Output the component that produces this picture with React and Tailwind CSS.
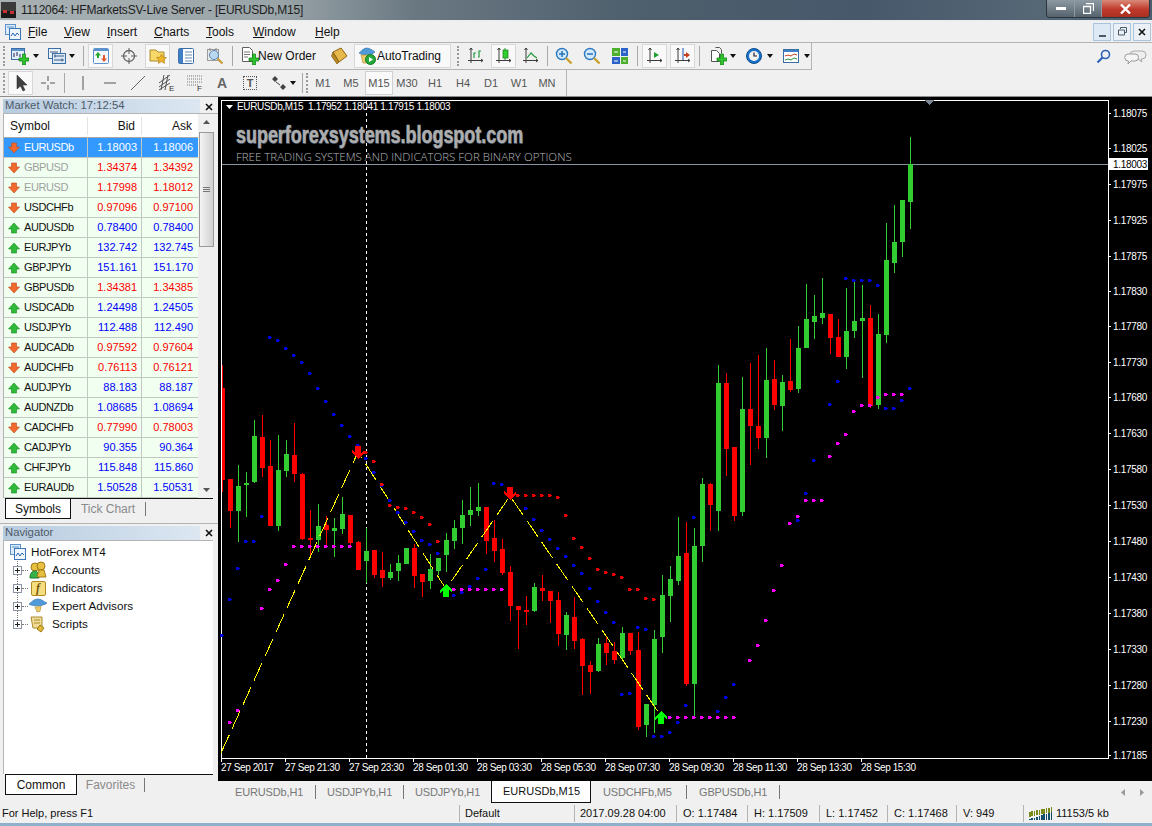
import React from 'react';

// [center x, wick top, body top, body bottom, wick bottom, colour]
const BARS = [
  [230,479,479,511,528,'r'],[238,465,486,511,542,'g'],[246,472,483,485,517,'g'],[254,420,436,482,483,'g'],
  [262,415,437,468,477,'r'],[270,440,466,526,526,'r'],[278,435,470,526,531,'g'],[286,440,454,471,477,'g'],
  [294,423,455,474,482,'r'],[302,473,474,539,540,'r'],[310,510,538,540,558,'r'],[318,504,526,540,552,'g'],
  [326,516,525,530,546,'r'],[334,518,528,531,557,'g'],[342,497,514,529,534,'g'],[350,515,515,543,547,'r'],
  [358,541,542,570,570,'r'],[366,528,551,561,583,'g'],[374,550,550,575,578,'r'],[382,552,570,578,587,'r'],
  [390,564,572,578,580,'g'],[398,555,563,571,581,'g'],[406,548,548,564,564,'g'],[414,544,548,576,588,'r'],
  [422,574,574,582,597,'r'],[430,554,569,581,589,'g'],[438,558,558,571,575,'g'],[446,533,540,555,572,'g'],
  [454,520,528,541,549,'g'],[462,500,515,528,544,'g'],[470,487,510,515,526,'g'],[478,483,507,511,516,'g'],
  [486,507,507,541,554,'r'],[494,520,538,551,562,'r'],[502,539,549,573,575,'r'],[510,566,572,606,621,'r'],
  [518,606,606,610,649,'r'],[526,596,610,612,625,'r'],[534,583,587,611,612,'g'],[542,575,588,591,601,'r'],
  [550,591,591,601,623,'r'],[558,592,600,634,646,'r'],[566,612,615,635,650,'g'],[574,597,617,641,649,'r'],
  [582,638,639,666,695,'r'],[590,661,665,672,694,'r'],[598,638,644,671,672,'g'],[606,637,643,653,665,'r'],
  [614,642,651,660,664,'r'],[622,627,633,658,661,'g'],[630,633,633,651,655,'r'],[638,632,650,727,730,'r'],
  [646,704,704,725,737,'g'],[654,630,639,705,733,'g'],[662,575,595,637,653,'g'],[670,566,579,596,622,'g'],
  [678,517,556,581,585,'g'],[686,522,553,684,686,'r'],[694,528,546,684,717,'g'],[702,478,484,546,562,'g'],
  [710,483,484,505,531,'r'],[718,365,383,511,531,'g'],[726,373,383,449,476,'r'],[734,447,447,516,521,'r'],
  [742,377,409,512,516,'g'],[750,363,409,426,465,'r'],[758,355,426,438,449,'r'],[766,348,380,438,458,'g'],
  [774,360,379,405,410,'r'],[782,375,382,406,431,'g'],[790,339,381,390,392,'r'],[798,326,348,389,393,'g'],
  [806,284,319,348,348,'g'],[814,295,316,322,339,'g'],[822,278,313,318,324,'g'],[830,314,314,338,354,'r'],
  [838,319,337,357,357,'r'],[846,288,331,357,369,'g'],[854,282,321,331,338,'g'],[862,285,318,321,378,'g'],
  [870,305,318,406,408,'r'],[878,314,334,405,409,'g'],[886,223,260,335,343,'g'],[894,205,242,263,273,'g'],
  [902,200,200,242,257,'g'],[910,137,164,202,229,'g'],
];

const BLUE = [
  [221,635],[229,599],[237,568],[245,541],[253,541],[261,516],[269,337],[277,340],[285,348],[293,355],[301,362],
  [309,373],[317,388],[325,401],[333,414],[341,425],[349,436],[357,445],[365,458],[373,472],[381,485],[389,500],
  [397,512],[405,522],[413,531],[421,540],[429,544],[437,553],[453,595],[461,592],[469,586],[477,578],[485,569],
  [493,483],[501,484],[509,488],[517,495],[525,508],[533,519],[541,530],[549,539],[557,548],[565,556],[573,565],
  [581,573],[589,588],[597,601],[605,612],[613,622],[621,694],[629,693],[637,627],[645,629],[653,736],[661,736],
  [669,732],[677,722],[685,705],[693,517],[717,711],[725,697],[733,684],[797,520],[805,493],[813,460],[829,404],
  [837,381],[845,278],[853,280],[861,280],[869,280],[877,285],[885,408],[893,408],[901,400],[909,388],
];

const RED = [
  [365,452],[373,461],[381,484],[389,505],[397,507],[405,508],[413,512],[421,517],[429,524],[437,541],
  [517,495],[525,495],[533,495],[541,495],[549,495],[557,497],[565,515],[573,538],[581,547],[589,558],[597,569],
  [605,572],[613,574],[621,577],[629,589],[637,589],[645,598],[653,599],
];

const MAGENTA = [
  [229,722],[237,710],[261,608],[269,589],[277,580],[285,564],[293,546],[301,546],[309,546],[317,546],[325,546],
  [333,546],[341,546],[349,546],[453,589],[461,589],[469,589],[477,589],[485,589],[493,589],[501,589],
  [669,717],[677,717],[685,717],[693,717],[701,717],[709,717],[717,717],[725,717],[733,717],
  [749,660],[757,645],[765,620],[773,590],[781,565],[789,523],[797,516],[805,500],[813,500],[821,500],
  [829,456],[837,443],[845,434],[853,411],[861,405],[869,405],[877,397],[885,394],[893,394],[901,394],
];

const PRICES = [
  ['1.18075',113],['1.18025',148],['1.17975',184],['1.17925',220],['1.17875',256],['1.17830',291],['1.17780',326],
  ['1.17730',362],['1.17680',397],['1.17630',433],['1.17580',469],['1.17530',505],['1.17480',541],['1.17430',577],
  ['1.17380',613],['1.17330',649],['1.17280',685],['1.17230',721],['1.17185',755],
];

const TIMES = [
  ['27 Sep 2017',221],['27 Sep 21:30',285],['27 Sep 23:30',349],['28 Sep 01:30',413],['28 Sep 03:30',477],
  ['28 Sep 05:30',541],['28 Sep 07:30',605],['28 Sep 09:30',669],['28 Sep 11:30',733],['28 Sep 13:30',797],['28 Sep 15:30',861],
];

const QUOTES = [
  ['EURUSDb','1.18003','1.18006','d'],['GBPUSD','1.34374','1.34392','d'],['EURUSD','1.17998','1.18012','d'],
  ['USDCHFb','0.97096','0.97100','d'],['AUDUSDb','0.78400','0.78400','u'],['EURJPYb','132.742','132.745','u'],
  ['GBPJPYb','151.161','151.170','u'],['GBPUSDb','1.34381','1.34385','d'],['USDCADb','1.24498','1.24505','u'],
  ['USDJPYb','112.488','112.490','u'],['AUDCADb','0.97592','0.97604','d'],['AUDCHFb','0.76113','0.76121','d'],
  ['AUDJPYb','88.183','88.187','u'],['AUDNZDb','1.08685','1.08694','u'],['CADCHFb','0.77990','0.78003','d'],
  ['CADJPYb','90.355','90.364','u'],['CHFJPYb','115.848','115.860','u'],['EURAUDb','1.50528','1.50531','u'],
];

const Sep = ({ className = '' }) => <span className={`h-[20px] w-px shrink-0 bg-[#a8a8a8] ${className}`} />;
const Grip = ({ className = '' }) => (
  <span className={`h-[20px] w-[2px] shrink-0 border-l-2 border-dotted border-[#9a9a9a] ${className}`} />
);
const Caret = ({ className = '' }) => (
  <svg width="6" height="4" viewBox="0 0 6 4" className={`shrink-0 ${className}`}><path d="M0 0h6L3 4z" fill="#111" /></svg>
);
const Boxed = ({ className = '', children }) => (
  <div className={`flex h-[24px] w-[25px] shrink-0 items-center justify-center border border-[#d8d8d8] bg-[#f9f9f9] ${className}`}>{children}</div>
);

const Ico = ({ s = 18, className = '', children }) => (
  <svg width={s} height={s} viewBox="0 0 18 18" className={`shrink-0 ${className}`}>{children}</svg>
);
const Plus = () => <path d="M8 11h3.500V7h3v4H18v3h-3.500v4h-3v-4H8z" fill="#2fc42f" stroke="#0b7d0b" strokeWidth=".7" />;

const NewChartIcon = ({ className }) => (
  <Ico className={className}>
    <rect x=".5" y="1.5" width="13" height="11" fill="#e4eefa" stroke="#3a6ea5" />
    <rect x="1" y="2" width="12" height="2" fill="#5b92cc" />
    <path d="M3 6v4M6 5v4M9 7v3" stroke="#225" fill="none" />
    <Plus />
  </Ico>
);
const ProfilesIcon = ({ className }) => (
  <Ico className={className}>
    <rect x=".5" y="1.5" width="12" height="10" fill="#eaf2fb" stroke="#3a6ea5" />
    <rect x="4.5" y="6.5" width="13" height="10" fill="#dce9f8" stroke="#3a6ea5" />
    <path d="M2 5h8M6 9h10M6 13h10M7 7.5v3M14 11.5v3" stroke="#3a5a80" fill="none" />
  </Ico>
);
const MarketIcon = () => (
  <Ico>
    <rect x="1.5" y="1.5" width="15" height="15" rx="1" fill="#f4f8fd" stroke="#5b92cc" />
    <rect x="2" y="2" width="14" height="2" fill="#5b92cc" />
    <path d="M6 5l3 3.5H7v2.5H5V8.500H3z" fill="#27a827" />
    <path d="M12 15l-3-3.500h2V8h2v3.500h2z" fill="#e4572a" />
  </Ico>
);
const CrossIcon = ({ className }) => (
  <Ico className={className}>
    <circle cx="9" cy="9" r="5.500" fill="none" stroke="#606060" strokeWidth="1.300" />
    <path d="M9 1v6M9 11v6M1 9h6M11 9h6" stroke="#606060" fill="none" />
  </Ico>
);
const FolderStarIcon = () => (
  <Ico>
    <path d="M1 3h6l2 2h6v9H1z" fill="#f8d868" stroke="#a88a2a" />
    <path d="M12.500 7l1.500 3.200 3.500.4-2.600 2.300.8 3.500-3.200-1.800-3.200 1.800.8-3.500-2.600-2.300 3.500-.4z" fill="#f0b428" stroke="#a87a10" strokeWidth=".6" />
  </Ico>
);
const NavIcon = ({ className }) => (
  <Ico className={className}>
    <rect x="1.500" y="1.500" width="15" height="15" rx="1" fill="#fff" stroke="#3a6ea5" />
    <rect x="2" y="2" width="4" height="14" fill="#3f7fc8" />
    <path d="M8 5h7M8 8h7M8 11h7M8 14h7" stroke="#6a8ab0" fill="none" />
  </Ico>
);
const TesterIcon = ({ className }) => (
  <Ico className={className}>
    <rect x="1.500" y="2.500" width="11" height="11" fill="#e8e8e8" stroke="#9a9a9a" />
    <path d="M4 1v3M10 1v3" stroke="#888" fill="none" />
    <circle cx="8" cy="8" r="4.500" fill="#bcd8f0" stroke="#5a88b8" />
    <path d="M11.500 11.500l5 5" stroke="#c89a38" strokeWidth="2.200" fill="none" />
  </Ico>
);
const NewOrderIcon = ({ className }) => (
  <Ico className={className}>
    <path d="M1.500.5h7l3 3v11h-10z" fill="#fff" stroke="#606060" />
    <path d="M3 5h6M3 7.500h6M3 10h4" stroke="#777" fill="none" />
    <Plus />
  </Ico>
);
const BookIcon = ({ className }) => (
  <Ico className={className}>
    <path d="M3 5l8-4 6 8-8 6z" fill="#e7b84c" stroke="#8c6410" />
    <path d="M1.500 9L3 5l6 10-2 2z" fill="#b88820" stroke="#7c5810" strokeWidth=".7" />
  </Ico>
);
const AutoIcon = ({ className }) => (
  <Ico className={className}>
    <path d="M1 6c2-1 3-4 7-5 4 0 6 2 9 4-3 3-12 4-16 1z" fill="#4f9ad8" stroke="#2a6aa8" strokeWidth=".6" />
    <path d="M3 8l9 0 1 8H5z" fill="#eccb6c" stroke="#a88a2a" strokeWidth=".6" />
    <circle cx="12.500" cy="12.500" r="5" fill="#25a83a" stroke="#0c7a20" />
    <path d="M11 10l4 2.500-4 2.500z" fill="#fff" />
  </Ico>
);
const Axes = () => <path d="M4 1v15M1 13.500h15M2.500 3L4 1l1.500 2M14 12l2 1.500-2 1.500" stroke="#3c3c3c" fill="none" />;
const BarsIcon = ({ className }) => (
  <Ico className={className}>
    <Axes />
    <path d="M7 11V6H9M9 3h0M11 10h1V4h2" stroke="#1f9a3a" strokeWidth="1.200" fill="none" />
  </Ico>
);
const CandleIcon = () => (
  <Ico>
    <Axes />
    <path d="M10 1v12" stroke="#1f9a3a" fill="none" />
    <rect x="8" y="3" width="5" height="8" fill="#2fd02f" stroke="#1a7a1a" strokeWidth=".7" />
  </Ico>
);
const LineIcon = ({ className }) => (
  <Ico className={className}>
    <Axes />
    <path d="M5 11l4-5 3 3 3 2" stroke="#1f9a3a" strokeWidth="1.200" fill="none" />
  </Ico>
);
const ZoomIcon = ({ minus, className }) => (
  <Ico className={className}>
    <circle cx="7" cy="7" r="5.500" fill="#d4e9f9" stroke="#2a78c0" strokeWidth="1.400" />
    <path d="M4 7h6" stroke="#2a78c0" strokeWidth="1.600" fill="none" />
    {!minus && <path d="M7 4v6" stroke="#2a78c0" strokeWidth="1.600" fill="none" />}
    <path d="M11 11l5.500 5.500" stroke="#caa02c" strokeWidth="2.400" fill="none" />
  </Ico>
);
const TileIcon = ({ className }) => (
  <Ico className={className}>
    <rect x="1" y="1" width="8" height="8" fill="#4caf2e" />
    <rect x="10" y="1" width="7" height="8" fill="#2a62c8" />
    <rect x="1" y="10" width="8" height="7" fill="#2a62c8" />
    <rect x="10" y="10" width="7" height="7" fill="#4caf2e" />
    <path d="M3 5h4M12 5h3M3 14h4M12 14h3" stroke="#fff" fill="none" />
  </Ico>
);
const ShiftIcon = () => (
  <Ico>
    <Axes />
    <path d="M8 5v6l5-3z" fill="#22a030" />
  </Ico>
);
const ScrollIcon = () => (
  <Ico>
    <Axes />
    <path d="M9 1v12" stroke="#2050b0" fill="none" />
    <path d="M16 8l-4-3v2h-2v2h2v2z" fill="#c8401a" />
  </Ico>
);
const NewChart2Icon = ({ className }) => (
  <Ico className={className}>
    <path d="M2.500 3.500h5l3 3v8h-8z" fill="#fff" stroke="#555" />
    <path d="M6.500.5h4l2 2v4" fill="none" stroke="#555" />
    <Plus />
  </Ico>
);
const ClockIcon = ({ className }) => (
  <Ico className={className}>
    <circle cx="9" cy="9" r="7.500" fill="#1a72c8" stroke="#0e4e90" />
    <circle cx="9" cy="9" r="5" fill="#f4f4f4" />
    <path d="M9 5.500V9h3" stroke="#223" strokeWidth="1.200" fill="none" />
  </Ico>
);
const TemplateIcon = ({ className }) => (
  <Ico className={className}>
    <rect x="1.500" y="2.500" width="15" height="13" fill="#fff" stroke="#3a6ea5" />
    <rect x="2" y="3" width="14" height="2" fill="#3f7fc8" />
    <path d="M3 9l3-1 3 1 3-2 3 1" stroke="#c8401a" fill="none" />
    <path d="M3 13l3-1 3 1 3-2 3 1" stroke="#2a9a3a" fill="none" />
  </Ico>
);
const CursorIcon = () => (
  <svg width="14" height="18" viewBox="0 0 14 18"><path d="M3 1v14l3.500-3 2.500 5 2-1-2.500-5H13z" fill="#404040" stroke="#202020" strokeWidth=".5" /></svg>
);
const MenuDocIcon = () => (
  <svg width="16" height="16" viewBox="0 0 16 16" className="shrink-0">
    <rect x=".5" y=".5" width="10" height="10" fill="#dceafa" stroke="#5b92cc" />
    <rect x="4.500" y="4.500" width="11" height="11" fill="#eef5fc" stroke="#3a76b8" />
    <path d="M2 3h7" stroke="#5b92cc" fill="none" />
    <path d="M6 12l2-3 2 3 2-3 2 2" stroke="#2a68b0" fill="none" />
  </svg>
);
const HatIcon = () => (
  <Ico>
    <path d="M0 7c2-1 4-5 9-5 4 0 6 3 9 4-3 3-14 4-18 1z" fill="#4f9ad8" stroke="#2a6aa8" strokeWidth=".6" />
    <path d="M6 10l6-.5-1 5-3 .5z" fill="#eccb6c" stroke="#a88a2a" strokeWidth=".6" />
  </Ico>
);
const ArrowMark = ({ dir }) => (
  <svg width="12" height="12" viewBox="0 0 12 12" className="shrink-0">
    {dir === 'd'
      ? <path d="M3.500 1h5v4h3L6 11 .5 5h3z" fill="#f06a30" stroke="#c04818" strokeWidth=".6" />
      : <path d="M3.500 11h5V7h3L6 1 .5 7h3z" fill="#30b838" stroke="#158a20" strokeWidth=".6" />}
  </svg>
);

const CloseX = ({ className = '' }) => (
  <svg width="8" height="8" viewBox="0 0 8 8" className={className}><path d="M1 1l6 6M7 1L1 7" stroke="#111" strokeWidth="1.600" fill="none" /></svg>
);

function TitleBar() {
  return (
    <div className="flex h-[21px] w-full items-center border-b border-[#e8eef0] bg-[linear-gradient(90deg,#a8b0b2_0%,#9aa5a9_24%,#6a7882_36%,#4e5f6d_55%,#46586a_75%,#566876_90%,#4b5e6e_100%)]">
      <svg width="15" height="16" viewBox="0 0 15 16" className="ml-px shrink-0">
        <rect width="15" height="16" fill="#3a3a3a" />
        <path d="M0 9h15v7H0z" fill="#1a1a1a" />
        <path d="M2 8h4v3H2zM9 9h4v3H9z" fill="#c83030" />
      </svg>
      <span className="ml-[5px] text-[12px] tracking-[-0.2px] text-[#1d1d1d] whitespace-nowrap">1112064: HFMarketsSV-Live Server - [EURUSDb,M15]</span>
      <div className="ml-auto mr-[2px] flex h-[18px] self-start overflow-hidden rounded-b-[4px] border border-t-0 border-[#2c3640]">
        <div className="flex w-[28px] items-center justify-center border-r border-[#8e9aa4] bg-[linear-gradient(#8d99a2,#56636e)]">
          <span className="h-[3px] w-[10px] bg-white" />
        </div>
        <div className="flex w-[27px] items-center justify-center border-r border-[#8e9aa4] bg-[linear-gradient(#8d99a2,#56636e)]">
          <svg width="11" height="11" viewBox="0 0 11 11"><path d="M3 .5h7.500V8M.5 3.500h7v7h-7z" fill="none" stroke="#fff" strokeWidth="1.300" /></svg>
        </div>
        <div className="flex w-[47px] items-center justify-center bg-[linear-gradient(#d88a78,#c0392b_55%,#a83020)]">
          <svg width="11" height="10" viewBox="0 0 11 10"><path d="M1 .5l9 9M10 .5l-9 9" stroke="#fff" strokeWidth="2.400" fill="none" /></svg>
        </div>
      </div>
    </div>
  );
}

function MenuBar() {
  return (
    <div className="flex h-[22px] w-full items-center border-b border-[#b4b4b4] bg-[#f0f0f0] text-[12px] text-[#111]">
      <span className="ml-[5px]"><MenuDocIcon /></span>
      <span className="ml-[7px] w-[36px]"><u>F</u>ile</span>
      <span className="w-[43px]"><u>V</u>iew</span>
      <span className="w-[47px]"><u>I</u>nsert</span>
      <span className="w-[52px]"><u>C</u>harts</span>
      <span className="w-[47px]"><u>T</u>ools</span>
      <span className="w-[62px]"><u>W</u>indow</span>
      <span><u>H</u>elp</span>
      <div className="ml-auto mr-[1px] flex gap-[2px]">
        <div className="flex h-[18px] w-[18px] items-end justify-center border border-[#a9c4de] bg-[#dde9f5] pb-[3px]"><span className="h-[2px] w-[7px] bg-[#4a5a68]" /></div>
        <div className="flex h-[18px] w-[18px] items-center justify-center border border-[#a9c4de] bg-[#eaf0f6]">
          <svg width="9" height="9" viewBox="0 0 9 9"><path d="M2.500 2V.5h6v5H7M.5 3h6v5h-6z" fill="none" stroke="#4a5a68" /></svg>
        </div>
        <div className="flex h-[18px] w-[18px] items-center justify-center border border-[#a9c4de] bg-[#eaf0f6]"><CloseX /></div>
      </div>
    </div>
  );
}

function MainToolbar() {
  return (
    <div className="flex h-[27px] w-full items-center bg-[#f0f0f0]">
      <div className="flex h-[27px] w-[812px] items-center border-r border-b border-[#b4b4b4] text-[12px] text-[#111]">
        <Grip className="ml-[3px]" />
        <NewChartIcon className="ml-[6px]" /><Caret className="ml-[4px]" />
        <ProfilesIcon className="ml-[9px]" /><Caret className="ml-[3px]" />
        <Sep className="ml-[8px]" />
        <Boxed className="ml-[4px]"><MarketIcon /></Boxed>
        <CrossIcon className="ml-[7px]" />
        <Boxed className="ml-[7px]"><FolderStarIcon /></Boxed>
        <NavIcon className="ml-[7px]" />
        <TesterIcon className="ml-[11px]" />
        <Sep className="ml-[8px]" />
        <NewOrderIcon className="ml-[8px]" />
        <span className="ml-[-1px] w-[62px] whitespace-nowrap">New Order</span>
        <BookIcon className="ml-[10px]" />
        <div className="ml-[6px] flex h-[24px] w-[97px] shrink-0 items-center border border-[#d8d8d8] bg-[#f9f9f9] pl-[3px]">
          <AutoIcon /><span className="ml-[1px] whitespace-nowrap tracking-[-0.1px]">AutoTrading</span>
        </div>
        <Grip className="ml-[6px]" />
        <BarsIcon className="ml-[8px]" />
        <Boxed className="ml-[6px]"><CandleIcon /></Boxed>
        <LineIcon className="ml-[6px]" />
        <Sep className="ml-[7px]" />
        <ZoomIcon className="ml-[7px]" />
        <ZoomIcon minus className="ml-[10px]" />
        <TileIcon className="ml-[10px]" />
        <Sep className="ml-[8px]" />
        <Boxed className="ml-[4px]"><ShiftIcon /></Boxed>
        <Boxed className="ml-[3px]"><ScrollIcon /></Boxed>
        <Sep className="ml-[4px]" />
        <NewChart2Icon className="ml-[9px]" /><Caret className="ml-[3px]" />
        <ClockIcon className="ml-[9px]" /><Caret className="ml-[4px]" />
        <TemplateIcon className="ml-[9px]" /><Caret className="ml-[4px]" />
      </div>
      <div className="ml-auto mr-[5px] flex items-center gap-[13px]">
        <svg width="15" height="15" viewBox="0 0 15 15"><circle cx="9.500" cy="5.500" r="4" fill="none" stroke="#2a62b8" strokeWidth="1.600" /><path d="M6.500 8.500L1.500 13.500" stroke="#2a62b8" strokeWidth="2.200" /></svg>
        <svg width="23" height="16" viewBox="0 0 23 16">
          <path d="M10 2h8a4 4 0 0 1 0 8h-1l1 3-4-3h-4a4 4 0 0 1 0-8z" fill="#eee" stroke="#aaa" />
          <path d="M4 5h7a3.500 3.500 0 0 1 0 7H7l-3 3 .5-3A3.500 3.500 0 0 1 4 5z" fill="#f6f6f6" stroke="#999" />
        </svg>
      </div>
    </div>
  );
}

function DrawToolbar() {
  const frames = ['M1', 'M5', 'M15', 'M30', 'H1', 'H4', 'D1', 'W1', 'MN'];
  return (
    <div className="flex h-[27px] w-full items-center border-b border-[#8c8c8c] bg-[#f0f0f0]">
      <div className="flex h-[26px] w-[567px] items-center border-r border-[#b4b4b4] text-[#444]">
        <Grip className="ml-[3px]" />
        <Boxed className="ml-[3px]"><CursorIcon /></Boxed>
        <svg width="16" height="16" viewBox="0 0 16 16" className="ml-[7px] shrink-0"><path d="M8 1v5M8 10v5M1 8h5M10 8h5" stroke="#555" fill="none" /></svg>
        <Sep className="ml-[8px]" />
        <svg width="2" height="14" viewBox="0 0 2 14" className="ml-[17px] shrink-0"><path d="M1 0v14" stroke="#555" /></svg>
        <svg width="12" height="2" viewBox="0 0 12 2" className="ml-[20px] shrink-0"><path d="M0 1h12" stroke="#555" /></svg>
        <svg width="14" height="14" viewBox="0 0 14 14" className="ml-[15px] shrink-0"><path d="M0 14L14 0" stroke="#666" /></svg>
        <svg width="17" height="18" viewBox="0 0 17 18" className="ml-[13px] shrink-0">
          <path d="M1 9L12 1M1 13L12 5M1 16L12 9M6 1l-3 15M10 1L7 16" stroke="#555" fill="none" />
          <text x="11" y="17" className="text-[8px]" fill="#333">E</text>
        </svg>
        <svg width="16" height="18" viewBox="0 0 16 18" className="ml-[12px] shrink-0">
          <path d="M0 2h15M0 5h15M0 8h15M0 11h11" stroke="#777" strokeDasharray="1 1" fill="none" />
          <text x="10" y="17" className="text-[8px]" fill="#333">F</text>
        </svg>
        <span className="ml-[14px] w-[10px] text-center text-[14px] font-bold text-[#666]">A</span>
        <div className="ml-[16px] flex h-[14px] w-[14px] shrink-0 items-center justify-center border border-dotted border-[#555] text-[11px] font-bold leading-none text-[#555]">T</div>
        <svg width="16" height="14" viewBox="0 0 16 14" className="ml-[14px] shrink-0">
          <path d="M1 3l3-3 3 3-3 3zM9 11l3-3 3 3-3 3z" fill="#444" />
          <path d="M5 6l4 3" stroke="#444" fill="none" />
        </svg>
        <Caret className="ml-[3px]" />
        <Sep className="ml-[6px]" />
        <Grip className="ml-[3px]" />
        <div className="ml-px flex text-[11px] text-[#555]">
          {frames.map((f) => (
            <div key={f} className={`flex h-[24px] w-[28px] items-center justify-center border ${f === 'M15' ? 'border-[#d0d0d0] bg-[#f9f9f9]' : 'border-transparent'}`}>{f}</div>
          ))}
        </div>
      </div>
    </div>
  );
}

function MarketWatch() {
  return (
    <div className="pl-[3px]">
      <div className="flex h-[16px] items-end">
        <div className="flex h-[14px] w-[197px] items-center bg-[linear-gradient(90deg,#b7cbdf,#dce7f2)] pl-[2px] text-[11.300px] leading-none text-[#4c5a68]">Market Watch: 17:12:54</div>
        <CloseX className="mb-[2px] ml-[5px]" />
      </div>
      <div className="flex border-t border-[#b4b4b4]">
        <div className="w-[195px] border-l border-[#b4b4b4]">
          <div className="flex h-[24px] items-center border-b border-[#a8a8a8] bg-white text-[12px] text-[#111]">
            <div className="w-[83px] pl-[6px]">Symbol</div>
            <div className="w-[54px] border-l border-[#e4e4e4] pr-[6px] text-right">Bid</div>
            <div className="w-[57px] border-l border-[#e4e4e4] pr-[6px] text-right">Ask</div>
          </div>
          {QUOTES.map(([sym, bid, ask, dir], i) => {
            const selected = i === 0;
            const price = selected ? 'text-white' : dir === 'd' ? 'text-[#ff0000]' : 'text-[#0000ff]';
            const name = selected ? 'text-white' : sym === 'GBPUSD' || sym === 'EURUSD' ? 'text-[#a0a0a0]' : 'text-[#111]';
            return (
              <div key={sym} className={`flex h-[20px] items-center border-b border-[#c2c8c2] text-[11px] ${selected ? 'bg-[#3399ff]' : 'bg-[#f0fff0]'}`}>
                <div className="flex w-[83px] items-center pl-[4px]">
                  <ArrowMark dir={dir} />
                  <span className={`ml-[4px] tracking-[-0.4px] ${name}`}>{sym}</span>
                </div>
                <div className={`flex h-full w-[54px] items-center justify-end border-l border-[#c2c8c2] pr-[4px] ${price}`}>{bid}</div>
                <div className={`flex h-full w-[57px] items-center justify-end border-l border-[#c2c8c2] pr-[5px] ${price}`}>{ask}</div>
              </div>
            );
          })}
        </div>
        <div className="ml-px flex w-[15px] flex-col items-center bg-[#f0f0f0]">
          <svg width="7" height="4" viewBox="0 0 7 4" className="mt-[6px]"><path d="M0 4L3.500 0 7 4z" fill="#555" /></svg>
          <div className="mt-[8px] flex h-[115px] w-[15px] flex-col items-center justify-center gap-px border border-[#9a9a9a] bg-[linear-gradient(90deg,#f4f4f4,#d0d0d0)]">
            <span className="h-px w-[7px] bg-[#777]" /><span className="h-px w-[7px] bg-[#777]" /><span className="h-px w-[7px] bg-[#777]" />
          </div>
          <svg width="7" height="4" viewBox="0 0 7 4" className="mt-auto mb-[6px]"><path d="M0 0L3.500 4 7 0z" fill="#555" /></svg>
        </div>
      </div>
    </div>
  );
}

function BottomTabs({ active, other, activeW, otherW }) {
  return (
    <div className="flex h-[22px] w-[208px] border-t border-[#111] text-[12px]">
      <div className={`flex h-[20px] items-center justify-center border-r border-b border-l border-[#111] bg-white text-[#111] ${activeW}`}>{active}</div>
      <div className={`mt-[3px] flex h-[14px] items-center justify-center border-r border-[#777] text-[#8a8a8a] ${otherW}`}>{other}</div>
    </div>
  );
}

function Navigator() {
  const items = [
    ['Accounts', (
      <Ico key="a">
        <circle cx="6" cy="6" r="4" fill="#e8c040" stroke="#a07a10" /><circle cx="12" cy="5" r="4" fill="#e8c040" stroke="#a07a10" />
        <path d="M1 17c0-6 3-7 5-7s4 2 4 7z" fill="#36b048" stroke="#157a28" />
        <path d="M8 16l2-7h5l2 7z" fill="#e8c040" stroke="#a07a10" />
      </Ico>
    )],
    ['Indicators', (
      <div key="i" className="flex h-[15px] w-[15px] items-center justify-center rounded-[2px] border border-[#b08a20] bg-[#f6dd80] text-[12px] font-bold italic leading-none text-[#7a5a10] [font-family:'Liberation_Serif',serif]">f</div>
    )],
    ['Expert Advisors', <HatIcon key="e" />],
    ['Scripts', (
      <Ico key="s">
        <path d="M2 2h11v11H4z" fill="#f0dc98" stroke="#a88a2a" />
        <path d="M5 5h6M5 8h6" stroke="#a88a2a" fill="none" />
        <path d="M11 10l4 3-3 4-4-3z" fill="#e0b838" stroke="#a07a10" />
      </Ico>
    )],
  ];
  return (
    <div className="pl-[3px]">
      <div className="flex h-[14px] items-center">
        <div className="flex h-[14px] w-[197px] items-center bg-[linear-gradient(90deg,#b7cbdf,#dce7f2)] pl-[2px] text-[11.300px] leading-none text-[#4c5a68]">Navigator</div>
        <CloseX className="ml-[5px]" />
      </div>
      <div className="relative h-[234px] w-[210px] border-t border-l border-[#b4b4b4] bg-white pt-[2px] text-[11.700px] text-[#111]">
        <div className="absolute top-[20px] left-[13px] h-[65px] border-l border-dotted border-[#777]" />
        <div className="flex h-[18px] items-center pl-[6px]">
          <MenuDocIcon />
          <span className="ml-[5px]">HotForex MT4</span>
        </div>
        {items.map(([label, icon]) => (
          <div key={label} className="flex h-[18px] items-center pl-[9px]">
            <div className="relative z-10 flex h-[9px] w-[9px] shrink-0 items-center justify-center border border-[#8a94a4] bg-white">
              <svg width="5" height="5" viewBox="0 0 5 5"><path d="M0 2.500h5M2.500 0v5" stroke="#222" /></svg>
            </div>
            <span className="w-[6px] border-t border-dotted border-[#777]" />
            <div className="ml-[1px] flex w-[18px] shrink-0 items-center justify-center">{icon}</div>
            <span className="ml-[5px]">{label}</span>
          </div>
        ))}
      </div>
    </div>
  );
}

function Arrow({ x, y, up, color }) {
  const d = 'M0-7 6-1 6 2 3-1 3 6-3 6-3-1-6 2-6-1Z';
  return <path d={d} transform={`translate(${x} ${y}) scale(1 ${up ? 1 : -1})`} fill={color} />;
}

const Dot = ({ x, y, fill }) => (
  <path d={`M${x - 1} ${y - 1}h3v1h1v1h-1v1h-3z`} fill={fill} />
);

function Chart() {
  return (
    <div className="relative h-[684px] w-[934px] bg-black">
      <svg width="934" height="684" viewBox="218 97 934 684" className="block" shapeRendering="crispEdges">
        {/* frame */}
        <path d="M221.500 758.500V100.500H1108.500V758.500Z" fill="none" stroke="#fff" />
        <path d="M222 164.500H1108" stroke="#8a94a2" />
        <path d="M366.500 101V758" stroke="#fff" strokeDasharray="3 3" />
        <path d="M924 100h10l-5 5z" fill="#7a8794" />

        <rect x="222" y="365" width="1" height="127" fill="#ff0000" />
        <rect x="222" y="388" width="3" height="92" fill="#ff0000" />
        {BARS.map(([x, wt, bt, bb, wb, c]) => {
          const col = c === 'g' ? '#32cd32' : '#ff0000';
          return (
            <g key={x} fill={col}>
              <rect x={x} y={wt} width="1" height={wb - wt} />
              <rect x={x - 2} y={bt} width="5" height={Math.max(bb - bt, 2)} />
            </g>
          );
        })}

        <path d="M221 753L358 452 446 589 510 496 661 716" fill="none" stroke="#ffff00" strokeDasharray="19.500 7" />

        {BLUE.map(([x, y]) => <Dot key={`b${x}${y}`} x={x} y={y} fill="#0000d8" />)}
        {RED.map(([x, y]) => <Dot key={`r${x}${y}`} x={x} y={y} fill="#e80000" />)}
        {MAGENTA.map(([x, y]) => <Dot key={`m${x}${y}`} x={x} y={y} fill="#ff00ff" />)}

        <Arrow x={358} y={452} color="#ff0000" />
        <Arrow x={510} y={493} color="#ff0000" />
        <Arrow x={446} y={591} up color="#00ff00" />
        <Arrow x={661} y={718} up color="#00ff00" />

        {PRICES.map(([p, y]) => (
          <g key={p}>
            <rect x="1108" y={y} width="3" height="1" fill="#fff" />
            <text x="1113" y={y + 4} fill="#fff" className="text-[10px] tracking-[-0.3px]">{p}</text>
          </g>
        ))}
        {TIMES.map(([t, x]) => (
          <g key={t}>
            <rect x={x} y="758" width="1" height="4" fill="#fff" />
            <text x={x} y="771" fill="#fff" className="text-[10px] tracking-[-0.4px]">{t}</text>
          </g>
        ))}
        <rect x="1109" y="158" width="39" height="12" fill="#fff" />
        <text x="1113" y="168" fill="#000" className="text-[10px] tracking-[-0.3px]">1.18003</text>
      </svg>

      <div className="absolute top-[5px] left-[8px] flex items-center text-[10px] leading-none text-white">
        <svg width="7" height="4" viewBox="0 0 7 4"><path d="M0 0h7L3.500 4z" fill="#fff" /></svg>
        <span className="ml-[4px] tracking-[-0.35px] whitespace-pre">EURUSDb,M15  1.17952 1.18041 1.17915 1.18003</span>
      </div>
      <div className="absolute top-[24px] left-[18px] origin-left scale-x-[0.78] text-[23px] font-bold leading-[28px] whitespace-nowrap text-[#adadad] [-webkit-text-stroke:0.6px_#adadad] [text-shadow:1px_1px_0_#24364f]">superforexsystems.blogspot.com</div>
      <div className="absolute top-[54px] left-[18px] text-[11.500px] leading-none whitespace-nowrap text-[#b4b8bc] [font-family:'Open_Sans',sans-serif] font-light">FREE TRADING SYSTEMS AND INDICATORS FOR BINARY OPTIONS</div>
    </div>
  );
}

function ChartTabs() {
  return (
    <div className="flex h-[23px] items-start bg-[#f0f0f0] text-[11px] text-[#777]">
      <div className="mt-[4px] h-[14px] w-[98px] border-r border-[#777] pl-[17px] leading-[14px] tracking-[-0.15px]">EURUSDb,H1</div>
      <div className="mt-[4px] h-[14px] w-[88px] border-r border-[#777] pl-[11px] leading-[14px] tracking-[-0.15px]">USDJPYb,H1</div>
      <div className="mt-[4px] h-[14px] w-[87px] pl-[11px] leading-[14px] tracking-[-0.15px]">USDJPYb,H1</div>
      <div className="h-[22px] w-[100px] border-x border-b border-[#111] bg-white pl-[11px] leading-[20px] text-[#111]">EURUSDb,M15</div>
      <div className="mt-[4px] h-[14px] w-[96px] border-r border-[#777] pl-[12px] leading-[14px] tracking-[-0.15px]">USDCHFb,M5</div>
      <div className="mt-[4px] h-[14px] w-[93px] border-r border-[#777] pl-[12px] leading-[14px] tracking-[-0.15px]">GBPUSDb,H1</div>
      <div className="mt-[8px] mr-[8px] ml-auto flex gap-[15px]">
        <svg width="4" height="7" viewBox="0 0 4 7"><path d="M4 0v7L0 3.500z" fill="#999" /></svg>
        <svg width="4" height="7" viewBox="0 0 4 7"><path d="M0 0v7l4-3.500z" fill="#999" /></svg>
      </div>
    </div>
  );
}

function StatusBar() {
  const cell = 'flex h-[17px] shrink-0 items-center border-l border-[#b4b4b4]';
  return (
    <div className="flex h-[19px] items-center bg-[#f0f0f0] text-[11px] text-[#111]">
      <div className="w-[459px] pl-[2px]">For Help, press F1</div>
      <div className={`${cell} w-[115px] pl-[5px]`}>Default</div>
      <div className={`${cell} w-[102px] pl-[5px]`}>2017.09.28 04:00</div>
      <div className={`${cell} w-[71px] pl-[6px]`}>O: 1.17484</div>
      <div className={`${cell} w-[72px] pl-[6px]`}>H: 1.17509</div>
      <div className={`${cell} w-[68px] pl-[6px]`}>L: 1.17452</div>
      <div className={`${cell} w-[69px] pl-[6px]`}>C: 1.17468</div>
      <div className={`${cell} w-[67px] pl-[6px]`}>V: 949</div>
      <div className={`${cell} grow pl-[5px]`}>
        <svg width="24" height="15" viewBox="0 0 24 15" shapeRendering="crispEdges">
          {[9, 8, 7, 6, 5, 4, 3, 2, 1, 0].map((t, i) => (
            <g key={i}>
              <rect x={i * 2.4} y={t * 0.5 + 1} width="1.500" height="5" fill="#7a8a18" />
              <rect x={i * 2.4} y={6 + t * 0.8} width="1.500" height={8 - t * 0.8} fill="#14506e" />
            </g>
          ))}
        </svg>
        <span className="ml-[3px]">11153/5 kb</span>
      </div>
    </div>
  );
}

export default function App() {
  return (
    <div className="flex h-[826px] w-[1152px] flex-col overflow-hidden bg-[#f0f0f0] text-[12px] [font-family:'Liberation_Sans',sans-serif]">
      <TitleBar />
      <MenuBar />
      <MainToolbar />
      <DrawToolbar />
      <div className="flex h-[707px]">
        <div className="flex w-[218px] shrink-0 flex-col">
          <MarketWatch />
          <div className="ml-[5px]"><BottomTabs active="Symbols" other="Tick Chart" activeW="w-[66px]" otherW="w-[75px]" /></div>
          <div className="mt-[3px] mb-[2px] h-px w-full bg-[#b4b4b4]" />
          <Navigator />
          <div className="ml-[5px]"><BottomTabs active="Common" other="Favorites" activeW="w-[72px]" otherW="w-[68px]" /></div>
        </div>
        <div className="flex w-[934px] flex-col">
          <Chart />
          <ChartTabs />
        </div>
      </div>
      <StatusBar />
      <div className="h-[3px] bg-[#8fb0c8]" />
    </div>
  );
}
